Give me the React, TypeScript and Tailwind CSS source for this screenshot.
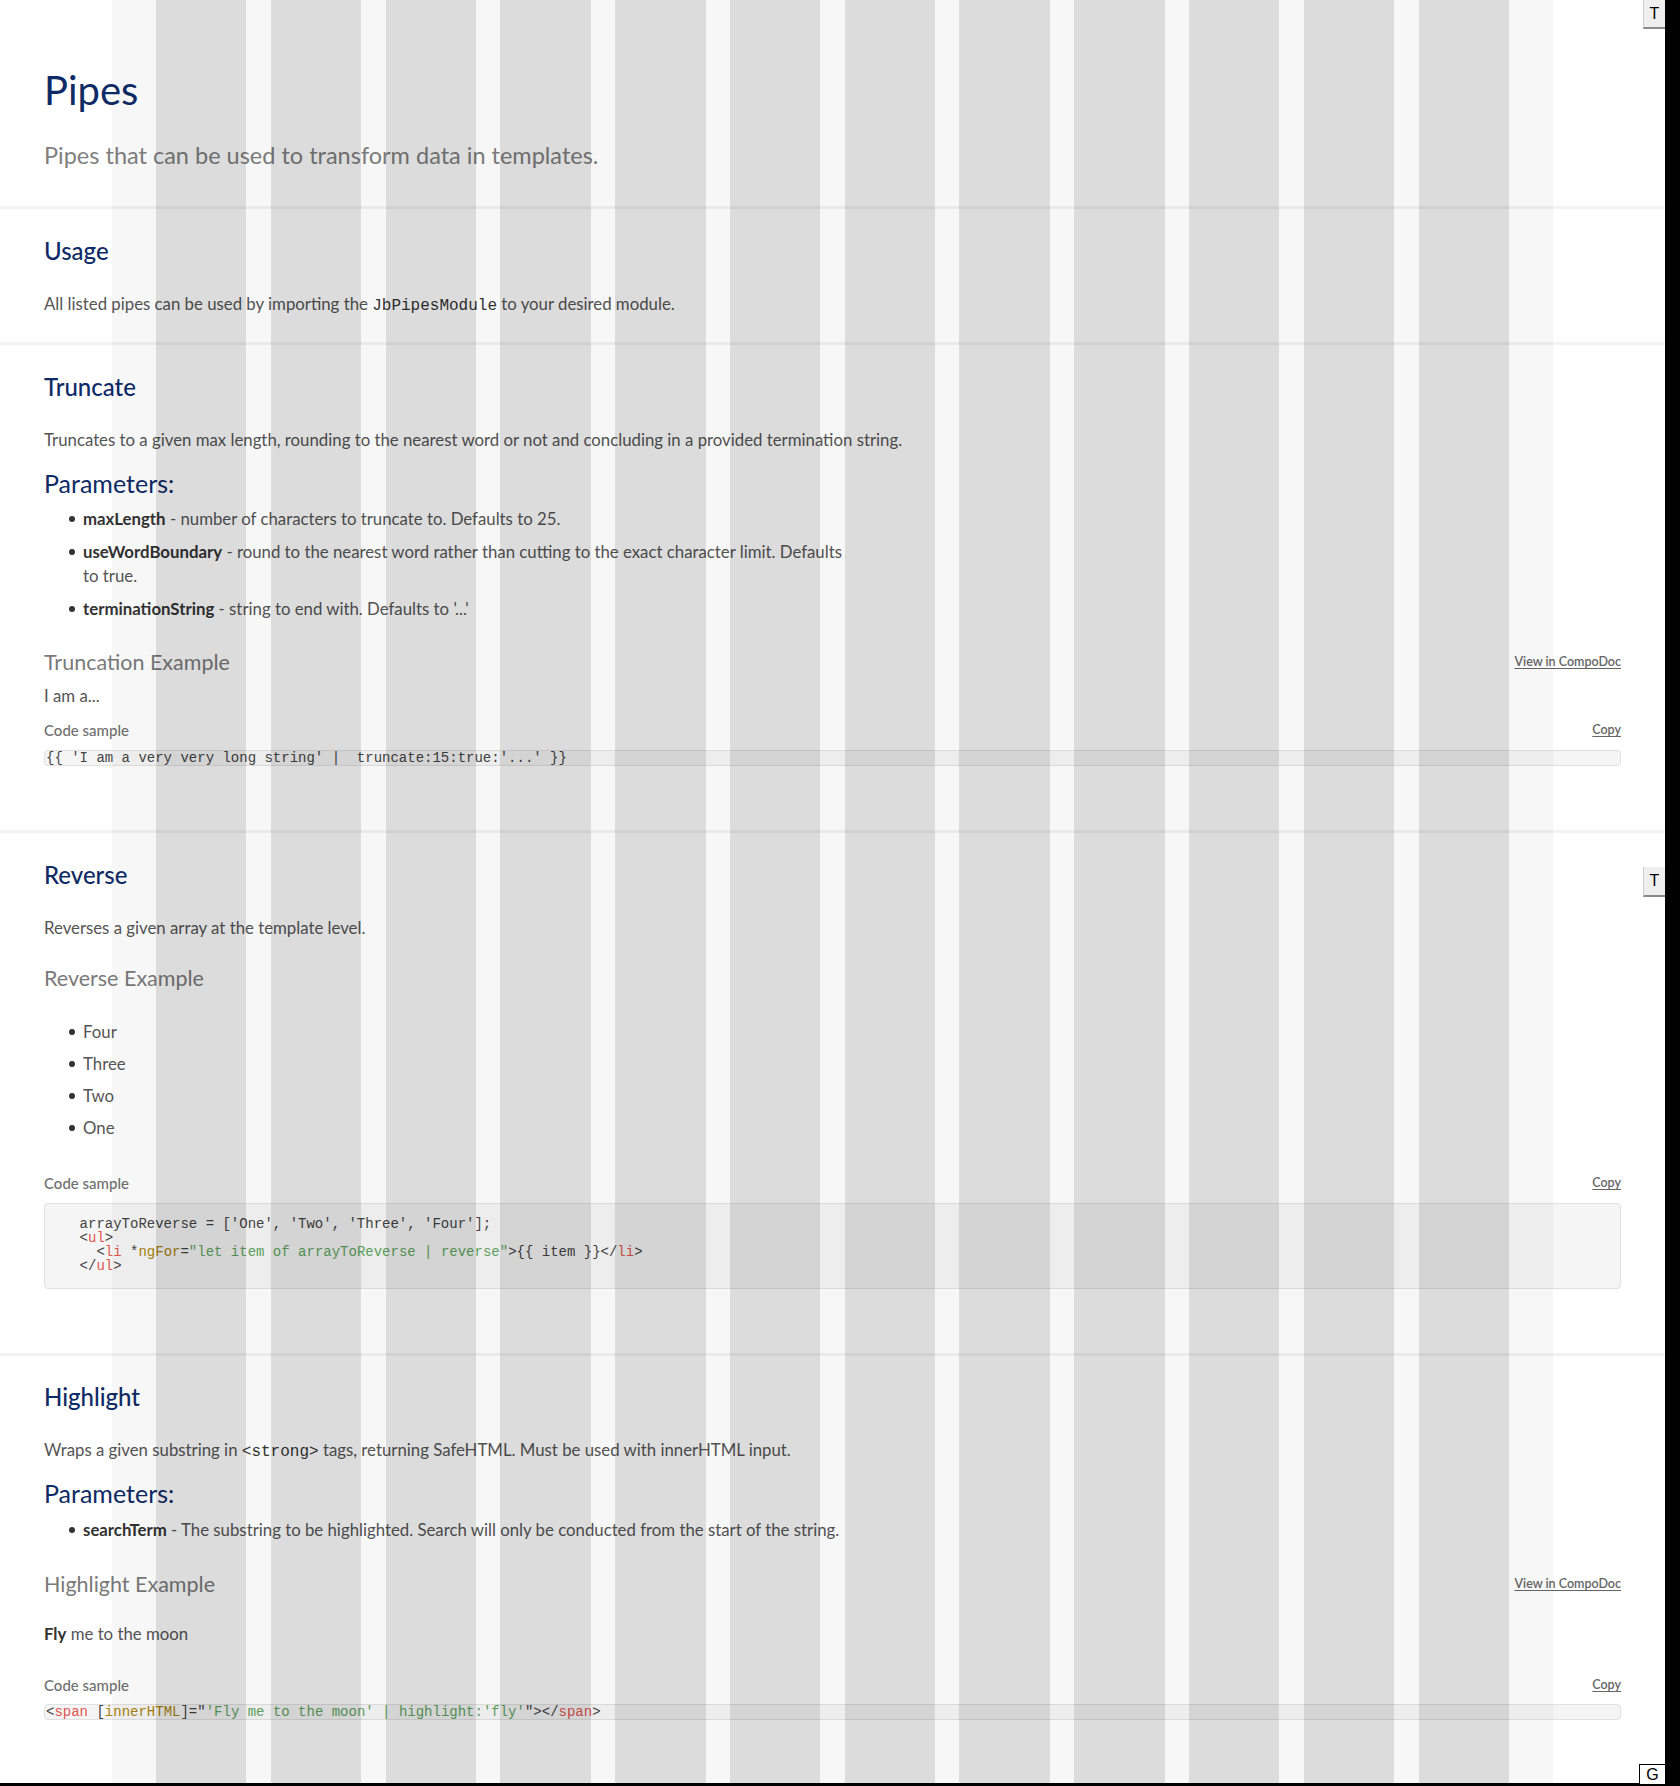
import React from 'react';

// layout-grid columns drawn over the page (12 cols)
const GridOverlay = () => (
  <div className="pointer-events-none absolute inset-0 flex justify-center">
    <div className="grid h-full w-[1441px] grid-cols-12 gap-x-[24.3px] bg-[rgba(0,0,0,0.031)] px-[44px]">
      {Array.from({ length: 12 }).map((_, i) => (
        <div key={i} className="h-full bg-[rgba(0,0,0,0.105)]" />
      ))}
    </div>
  </div>
);

const Separator = () => <div className="h-[3px] w-full bg-[#f2f2f2]" />;

const H2 = ({ children }: { children: React.ReactNode }) => (
  <h2 className="text-[24px] font-medium leading-[32px] text-[#0f2b66]">{children}</h2>
);

const Desc = ({ children }: { children: React.ReactNode }) => (
  <p className="mt-[25px] text-[16.8px] leading-[24px] text-[#555]">{children}</p>
);

const Params = ({ children }: { children: React.ReactNode }) => (
  <h3 className="mt-[16px] text-[25px] font-normal leading-[30px] text-[#0f2b66]">{children}</h3>
);

const Mono = ({ children }: { children: React.ReactNode }) => (
  <code className="font-['Liberation_Mono',monospace] text-[16px] leading-none text-[#333]">{children}</code>
);

// list item with a round bullet, text wraps under itself
const Item = ({ children, className = '' }: { children: React.ReactNode; className?: string }) => (
  <li className={`flex ${className}`}>
    <span className="ml-[25px] mr-[8px] mt-[9px] h-[6px] w-[6px] shrink-0 rounded-full bg-[#333]" />
    <span>{children}</span>
  </li>
);

const ExampleHeader = ({ title, link }: { title: string; link?: boolean }) => (
  <div className="flex items-center justify-between">
    <h4 className="text-[21.5px] font-normal leading-[28px] text-[#7a7a7a]">{title}</h4>
    {link && (
      <a className="text-[12.5px] font-semibold text-[#666] underline underline-offset-2">View in CompoDoc</a>
    )}
  </div>
);

const CodeLabel = ({ className }: { className: string }) => (
  <div className={`flex items-center justify-between ${className}`}>
    <span className="text-[15px] font-medium leading-[20px] text-[#6f6f6f]">Code sample</span>
    <a className="text-[12.5px] font-semibold text-[#666] underline underline-offset-2">Copy</a>
  </div>
);

const Tag = ({ children }: { children: React.ReactNode }) => <span className="text-[#e0564f]">{children}</span>;
const Attr = ({ children }: { children: React.ReactNode }) => <span className="text-[#a8820c]">{children}</span>;
const Str = ({ children }: { children: React.ReactNode }) => <span className="text-[#5fa55f]">{children}</span>;

const codeBox =
  "rounded-[4px] border border-[#e0e0e0] bg-[#f5f5f5] font-['Liberation_Mono',monospace] text-[14px] leading-[14px] text-[#444] whitespace-pre";

const SideButton = ({ label, className }: { label: string; className: string }) => (
  <div
    className={`absolute right-0 flex items-center justify-center font-['Liberation_Sans',sans-serif] text-[16px] text-black ${className}`}
  >
    {label}
  </div>
);

const strong = 'font-bold text-[#333]';

export default function App() {
  return (
    <div className="flex h-[1786px] w-[1680px] flex-col overflow-hidden bg-black font-['Lato','Noto_Sans',sans-serif]">
      <div className="flex h-[1783px]">
        <div className="relative w-[1665px] bg-white">
          {/* header */}
          <header className="px-[44px] pb-[36px] pt-[64px]">
            <h1 className="text-[40px] font-normal leading-[53px] text-[#0f2b66]">Pipes</h1>
            <p className="mt-[23px] text-[23.5px] leading-[30px] text-[#808080]">
              Pipes that can be used to transform data in templates.
            </p>
          </header>
          <Separator />

          {/* usage */}
          <section className="px-[44px] pb-[26px] pt-[26px]">
            <H2>Usage</H2>
            <Desc>
              All listed pipes can be used by importing the <Mono>JbPipesModule</Mono> to your desired module.
            </Desc>
          </section>
          <Separator />

          {/* truncate */}
          <section className="px-[44px] pb-[64px] pt-[26px]">
            <H2>Truncate</H2>
            <Desc>
              Truncates to a given max length, rounding to the nearest word or not and concluding in a provided
              termination string.
            </Desc>
            <Params>Parameters:</Params>
            <ul className="mt-[9px] max-w-[800px] space-y-[9px] text-[16.8px] leading-[24px] text-[#555]">
              <Item>
                <strong className={strong}>maxLength</strong> - number of characters to truncate to. Defaults to 25.
              </Item>
              <Item>
                <strong className={strong}>useWordBoundary</strong> - round to the nearest word rather than cutting to
                the exact character limit. Defaults to true.
              </Item>
              <Item>
                <strong className={strong}>terminationString</strong> - string to end with. Defaults to '...'
              </Item>
            </ul>
            <div className="mt-[27px]">
              <ExampleHeader title="Truncation Example" link />
            </div>
            <p className="mt-[8px] text-[16.8px] leading-[24px] text-[#555]">I am a...</p>
            <CodeLabel className="mt-[12px]" />
            <div className={`mt-[10px] px-[1px] ${codeBox}`}>
              {"{{ 'I am a very very long string' |  truncate:15:true:'...' }}"}
            </div>
          </section>
          <Separator />

          {/* reverse */}
          <section className="px-[44px] pb-[64px] pt-[26px]">
            <H2>Reverse</H2>
            <Desc>Reverses a given array at the template level.</Desc>
            <div className="mt-[24px]">
              <ExampleHeader title="Reverse Example" />
            </div>
            <ul className="mt-[28px] space-y-[8px] text-[16.8px] leading-[24px] text-[#555]">
              <Item>Four</Item>
              <Item>Three</Item>
              <Item>Two</Item>
              <Item>One</Item>
            </ul>
            <CodeLabel className="mt-[33px]" />
            <div className={`mt-[10px] pb-[15px] pl-[1px] pt-[13px] ${codeBox}`}>
              <div>{"    arrayToReverse = ['One', 'Two', 'Three', 'Four'];"}</div>
              <div>
                {'    <'}
                <Tag>ul</Tag>
                {'>'}
              </div>
              <div>
                {'      <'}
                <Tag>li</Tag>
                {' *'}
                <Attr>ngFor</Attr>
                {'='}
                <Str>"let item of arrayToReverse | reverse"</Str>
                {'>{{ item }}</'}
                <Tag>li</Tag>
                {'>'}
              </div>
              <div>
                {'    </'}
                <Tag>ul</Tag>
                {'>'}
              </div>
            </div>
          </section>
          <Separator />

          {/* highlight */}
          <section className="px-[44px] pt-[25px]">
            <H2>Highlight</H2>
            <Desc>
              Wraps a given substring in <Mono>{'<strong>'}</Mono> tags, returning SafeHTML. Must be used with innerHTML
              input.
            </Desc>
            <Params>Parameters:</Params>
            <ul className="mt-[10px] max-w-[800px] text-[16.8px] leading-[24px] text-[#555]">
              <Item>
                <strong className={strong}>searchTerm</strong> - The substring to be highlighted. Search will only be
                conducted from the start of the string.
              </Item>
            </ul>
            <div className="mt-[28px]">
              <ExampleHeader title="Highlight Example" link />
            </div>
            <p className="mt-[24px] text-[16.8px] leading-[24px] text-[#555]">
              <strong className={strong}>Fly</strong> me to the moon
            </p>
            <CodeLabel className="mt-[29px]" />
            <div className={`mt-[9px] px-[1px] ${codeBox}`}>
              {'<'}
              <Tag>span</Tag>
              {' ['}
              <Attr>innerHTML</Attr>
              {']="'}
              <Str>'Fly me to the moon' | highlight:'fly'</Str>
              {'"></'}
              <Tag>span</Tag>
              {'>'}
            </div>
          </section>

          <GridOverlay />

          <SideButton
            label="T"
            className="top-0 h-[29px] w-[22px] border-b-2 border-l border-b-[#8a8a8a] border-l-[#d0d0d0] bg-[#efefef]"
          />
          <SideButton
            label="T"
            className="top-[867px] h-[30px] w-[22px] border-b-2 border-l border-b-[#8a8a8a] border-l-[#d0d0d0] bg-[#efefef]"
          />
          <SideButton
            label="G"
            className="top-[1764px] h-[20px] w-[26px] border-l border-t border-black bg-white text-[14px]"
          />
        </div>
        <div className="w-[15px] bg-black" />
      </div>
    </div>
  );
}
